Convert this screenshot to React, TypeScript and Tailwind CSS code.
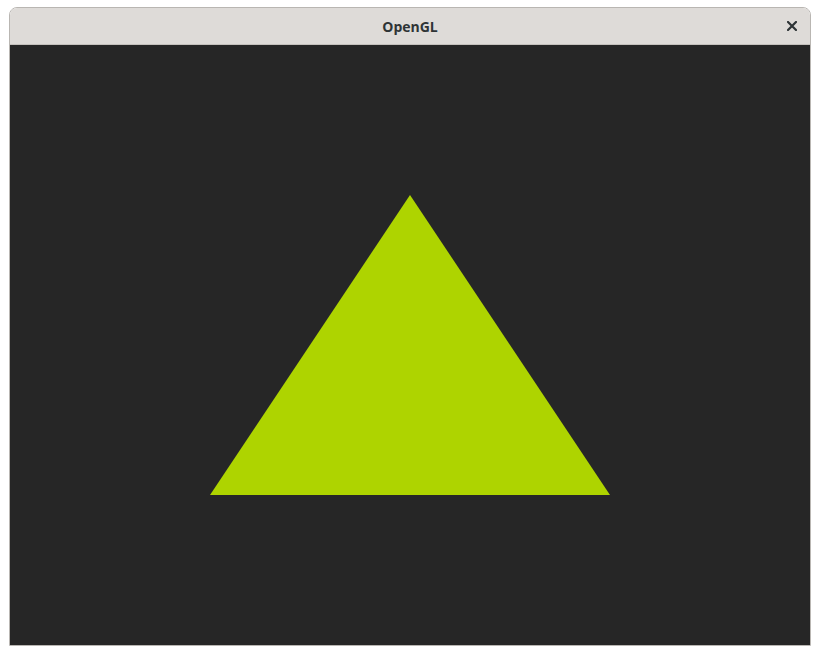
import React from "react";

export default function App() {
  return (
    <div className="w-[820px] h-[655px] bg-white pt-[7px] pl-[9px]">
      <div className="w-[802px] border border-[#b9b6b2] rounded-t-[8px] overflow-hidden flex flex-col">
        <div className="h-[37px] bg-[#dedbd8] border-b border-[#c4c1bd] flex items-center justify-center relative">
          <span
            className="text-[14px] font-bold text-[#2e3436]"
            style={{ fontFamily: '"Open Sans", "Noto Sans", sans-serif' }}
          >
            OpenGL
          </span>
          <svg
            className="absolute right-[13px] top-[13px]"
            width="10"
            height="10"
            viewBox="0 0 10 10"
          >
            <path d="M1 1 L9 9 M9 1 L1 9" stroke="#2e3436" strokeWidth="2.2" strokeLinecap="square" />
          </svg>
        </div>
        <div className="w-[800px] h-[600px] bg-[#262626]">
          <svg width="800" height="600" viewBox="0 0 800 600">
            <polygon points="400,150 600,450 200,450" fill="#aed400" />
          </svg>
        </div>
      </div>
    </div>
  );
}
